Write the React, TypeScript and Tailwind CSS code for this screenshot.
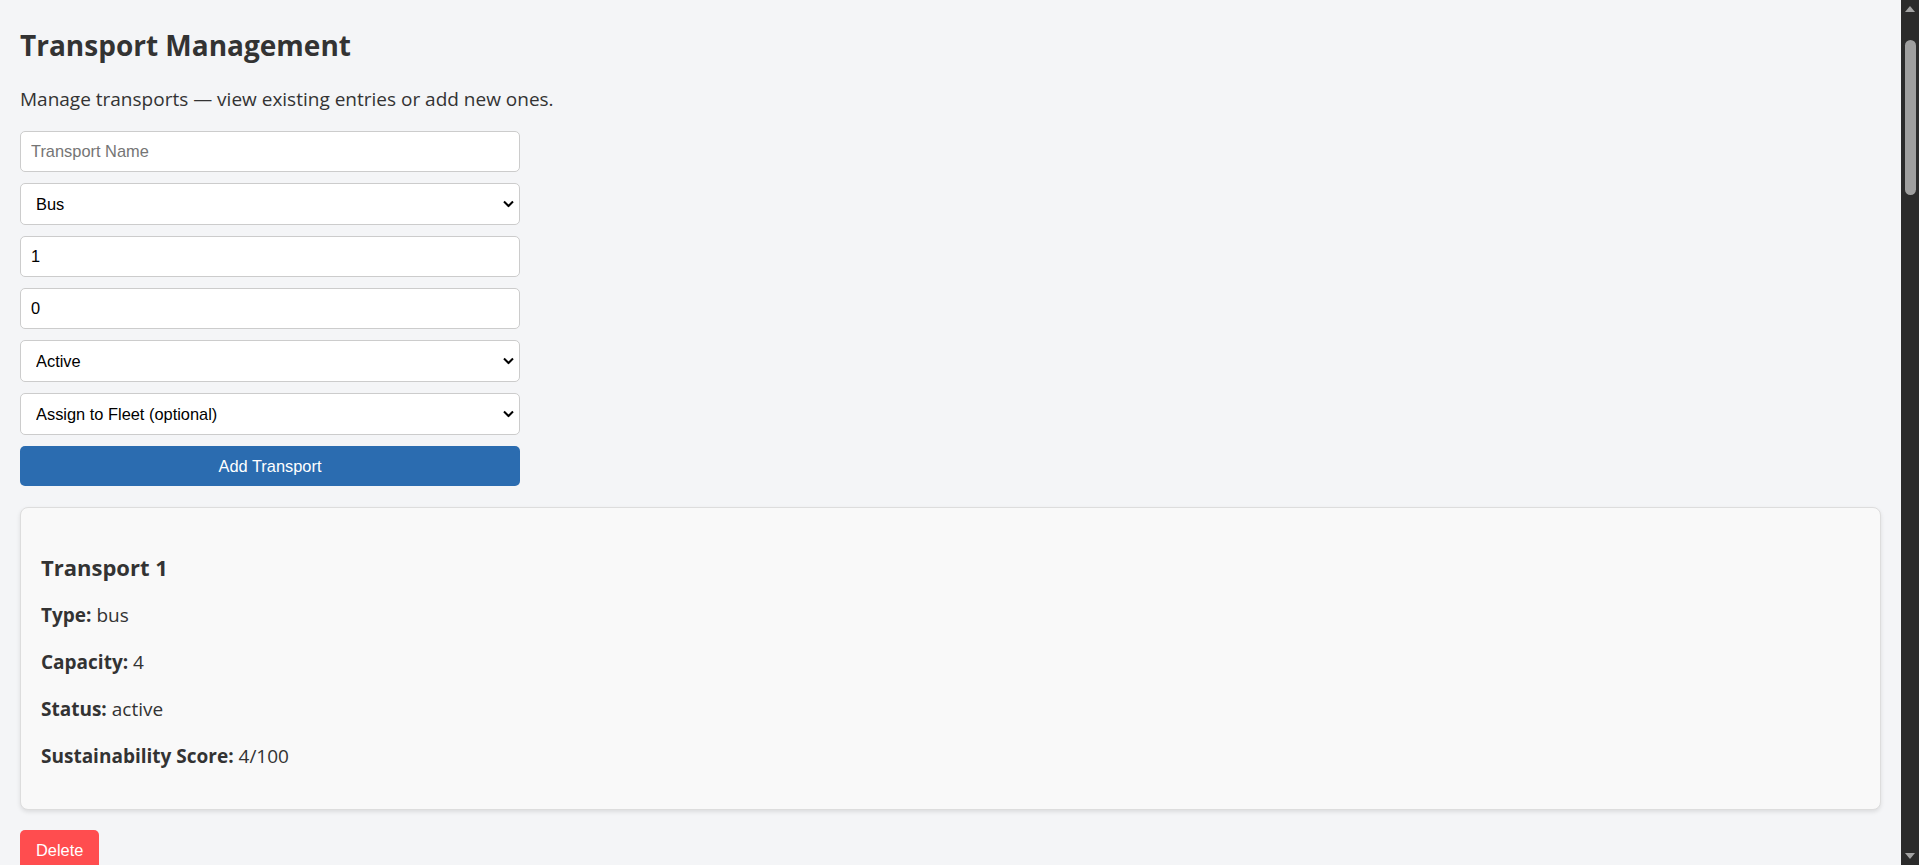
import { useState } from "react";

type Transport = {
  id: number;
  name: string;
  type: string;
  capacity: number;
  status: string;
  score: number;
};

const initialTransports: Transport[] = [
  { id: 1, name: "Transport 1", type: "bus", capacity: 4, status: "active", score: 4 },
  { id: 2, name: "Transport 2", type: "train", capacity: 120, status: "active", score: 62 },
  { id: 3, name: "Transport 3", type: "bike", capacity: 1, status: "active", score: 95 },
  { id: 4, name: "Transport 4", type: "car", capacity: 5, status: "maintenance", score: 30 },
  { id: 5, name: "Transport 5", type: "bus", capacity: 40, status: "active", score: 48 },
  { id: 6, name: "Transport 6", type: "tram", capacity: 80, status: "inactive", score: 71 },
  { id: 7, name: "Transport 7", type: "bus", capacity: 35, status: "active", score: 44 },
  { id: 8, name: "Transport 8", type: "car", capacity: 4, status: "active", score: 22 },
  { id: 9, name: "Transport 9", type: "train", capacity: 200, status: "active", score: 66 },
  { id: 10, name: "Transport 10", type: "bike", capacity: 2, status: "inactive", score: 90 },
  { id: 11, name: "Transport 11", type: "bus", capacity: 50, status: "active", score: 51 },
];

const fieldClass =
  "w-[500px] rounded-[5px] border border-[#ccc] bg-white text-[16.4px] text-black font-['Liberation_Sans',Arial,sans-serif] outline-none";

function Chevron() {
  return (
    <svg
      className="pointer-events-none absolute right-[6px] top-1/2 -translate-y-1/2"
      width="11"
      height="7"
      viewBox="0 0 11 7"
      fill="none"
    >
      <path d="M1 1l4.5 4.5L10 1" stroke="#000" strokeWidth="2" />
    </svg>
  );
}

function Select({
  value,
  onChange,
  children,
}: {
  value: string;
  onChange: (v: string) => void;
  children: React.ReactNode;
}) {
  return (
    <div className="relative w-[500px]">
      <select
        className={`${fieldClass} h-[42px] appearance-none pl-[15px] pr-8 pt-px`}
        value={value}
        onChange={(e) => onChange(e.target.value)}
      >
        {children}
      </select>
      <Chevron />
    </div>
  );
}

function Scrollbar() {
  return (
    <div aria-hidden className="flex w-[18px] shrink-0 flex-col items-center bg-[#2b2b2b]">
      <svg width="18" height="17" viewBox="0 0 18 17">
        <polygon points="9,6 14,12 4,12" fill="#a3a3a3" />
      </svg>
      <div className="mt-[23px] h-[155px] w-[11px] rounded-full bg-[#9f9f9f]" />
      <div className="flex-1" />
      <svg width="18" height="17" viewBox="0 0 18 17">
        <polygon points="4,5 14,5 9,11" fill="#a3a3a3" />
      </svg>
    </div>
  );
}

export default function App() {
  const [transports, setTransports] = useState<Transport[]>(initialTransports);
  const [name, setName] = useState("");
  const [type, setType] = useState("bus");
  const [capacity, setCapacity] = useState("1");
  const [score, setScore] = useState("0");
  const [status, setStatus] = useState("active");
  const [fleet, setFleet] = useState("");

  const addTransport = () => {
    const id = transports.length ? Math.max(...transports.map((t) => t.id)) + 1 : 1;
    setTransports([
      ...transports,
      {
        id,
        name: name || `Transport ${id}`,
        type,
        capacity: Number(capacity) || 1,
        status,
        score: Number(score) || 0,
      },
    ]);
    setName("");
  };

  return (
    <div className="flex h-screen bg-[#f4f5f7]">
      <div className="min-w-0 flex-1 overflow-y-auto [scrollbar-width:none]">
        <div className="p-5 text-[#333] font-['Open_Sans','Noto_Sans',sans-serif]">
          <h1 className="text-[28px] font-bold leading-[50px]">Transport Management</h1>
          <p className="mt-[15px] text-[19px] leading-[29px]">
            Manage transports — view existing entries or add new ones.
          </p>

          <div className="mt-[17px] flex flex-col gap-[11px]">
            <input
              className={`${fieldClass} h-[41px] px-[10px] placeholder:text-[#757575]`}
              placeholder="Transport Name"
              value={name}
              onChange={(e) => setName(e.target.value)}
            />
            <Select value={type} onChange={setType}>
              <option value="bus">Bus</option>
              <option value="train">Train</option>
              <option value="car">Car</option>
              <option value="bike">Bike</option>
            </Select>
            <input
              type="number"
              className={`${fieldClass} h-[41px] px-[10px]`}
              value={capacity}
              onChange={(e) => setCapacity(e.target.value)}
            />
            <input
              type="number"
              className={`${fieldClass} h-[41px] px-[10px]`}
              value={score}
              onChange={(e) => setScore(e.target.value)}
            />
            <Select value={status} onChange={setStatus}>
              <option value="active">Active</option>
              <option value="inactive">Inactive</option>
              <option value="maintenance">Maintenance</option>
            </Select>
            <Select value={fleet} onChange={setFleet}>
              <option value="">Assign to Fleet (optional)</option>
              <option value="north">North Fleet</option>
              <option value="south">South Fleet</option>
            </Select>
            <button
              onClick={addTransport}
              className="h-[40px] w-[500px] rounded-[5px] bg-[#2b6cb0] text-[16.4px] text-white font-['Liberation_Sans',Arial,sans-serif]"
            >
              Add Transport
            </button>
          </div>

          <div className="mt-[21px] flex flex-col">
            {transports.map((t) => (
              <div key={t.id} className="mb-[21px]">
                <div className="flex flex-col rounded-[8px] border border-[#ddd] bg-[#f9f9f9] px-5 pt-[40px] pb-[38px] shadow-[0_2px_4px_rgba(0,0,0,0.1)]">
                  <h2 className="mb-[15px] text-[22px] font-bold leading-[38px]">{t.name}</h2>
                  <div className="flex flex-col gap-[18px] text-[19px] leading-[29px]">
                    <p>
                      <strong>Type:</strong> {t.type}
                    </p>
                    <p>
                      <strong>Capacity:</strong> {t.capacity}
                    </p>
                    <p>
                      <strong>Status:</strong> {t.status}
                    </p>
                    <p>
                      <strong>Sustainability Score:</strong> {t.score}/100
                    </p>
                  </div>
                </div>
                <button
                  onClick={() => setTransports(transports.filter((x) => x.id !== t.id))}
                  className="mt-[20px] rounded-[5px] bg-[#ff4d4f] px-4 py-2 text-[16.4px] text-white font-['Liberation_Sans',Arial,sans-serif]"
                >
                  Delete
                </button>
              </div>
            ))}
          </div>
        </div>
      </div>
      <Scrollbar />
    </div>
  );
}
